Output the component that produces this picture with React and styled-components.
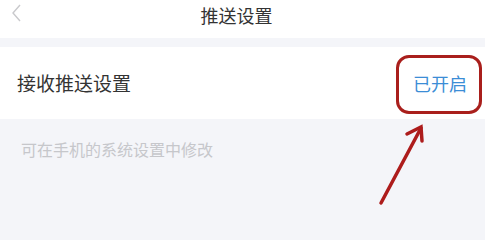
import React from 'react';
import styled, {createGlobalStyle} from 'styled-components';

const GlobalStyle = createGlobalStyle`
  html, body {
    margin: 0;
    padding: 0;
    background: #f4f5f9;
    font-family: "Noto Sans CJK SC", "Noto Sans", sans-serif;
  }
`;

const Page = styled.div`
  position: relative;
  width: 485px;
  height: 212px;
  overflow: hidden;
  background: #f4f5f9;
`;

const Header = styled.div`
  position: relative;
  height: 38px;
  background: #ffffff;
  display: flex;
  align-items: center;
  justify-content: center;
  padding-right: 12px;
  margin-bottom: 9px;

  .back {
    position: absolute;
    left: 11px;
    top: 3px;
  }
`;

const Title = styled.div`
  font-size: 18px;
  color: #333333;
  line-height: 1;
  margin-top: -9px;
`;

const Row = styled.div`
  position: relative;
  height: 72px;
  background: #ffffff;
  display: flex;
  align-items: center;
  justify-content: space-between;
  padding: 0 18px 0 17px;
`;

const Label = styled.div`
  font-size: 19px;
  color: #333333;
  line-height: 1;
  margin-top: -1px;
`;

const Value = styled.div`
  font-size: 18px;
  color: #3b8dd6;
  line-height: 1;
  margin-top: -1px;
`;

const Ring = styled.div`
  position: absolute;
  right: 3px;
  top: 8px;
  width: 80px;
  height: 53px;
  border: 3px solid #a91f1c;
  border-radius: 13px;
`;

const Caption = styled.div`
  padding: 22px 21px;
  font-size: 16px;
  color: #c6c7cb;
  line-height: 1;
`;

const Arrow = styled.svg`
  position: absolute;
  left: 0;
  top: 0;
  pointer-events: none;
`;

export default function App() {
    return (
        <>
            <GlobalStyle/>
            <Page>
                <Header>
                    <svg className="back" width="12" height="20" viewBox="0 0 12 20">
                        <path d="M9 2 L2 10 L9 18" fill="none" stroke="#c9c9cc" strokeWidth="1.4"/>
                    </svg>
                    <Title>推送设置</Title>
                </Header>
                <Row>
                    <Label>接收推送设置</Label>
                    <Value>已开启</Value>
                    <Ring/>
                </Row>
                <Caption>可在手机的系统设置中修改</Caption>
                <Arrow width="485" height="212" viewBox="0 0 485 212">
                    <path d="M381 203 L421 128" stroke="#ad1c1c" strokeWidth="3.5" strokeLinecap="round"/>
                    <path d="M407 134 L421 127 L422 141" fill="none" stroke="#ad1c1c" strokeWidth="3.5"
                          strokeLinecap="round" strokeLinejoin="miter"/>
                </Arrow>
            </Page>
        </>
    );
}
